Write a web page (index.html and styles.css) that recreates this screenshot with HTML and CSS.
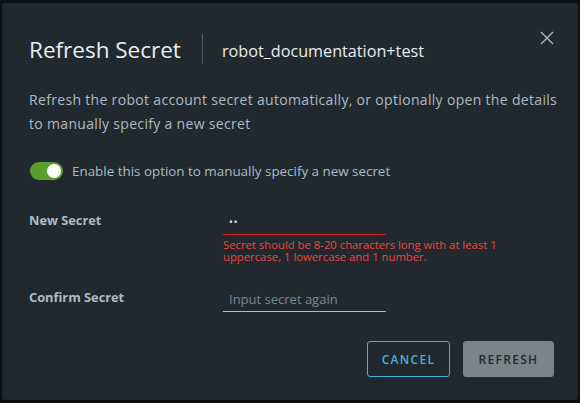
FILE: index.html
```html
<!DOCTYPE html>
<html>
<head>
<meta charset="utf-8">
<link rel="stylesheet" href="styles.css">
</head>
<body>
<div class="backdrop">
  <div class="modal">
    <div class="header">
      <h1 class="title">Refresh Secret</h1>
      <div class="divider"></div>
      <div class="subtitle">robot_documentation+test</div>
      <button class="close" aria-label="Close">
        <svg width="14" height="14" viewBox="0 0 14 14"><path d="M1 1 L13 13 M13 1 L1 13" stroke="#adbbc4" stroke-width="1.4" fill="none"/></svg>
      </button>
    </div>
    <p class="desc">Refresh the robot account secret automatically, or optionally open the details to manually specify a new secret</p>
    <div class="toggle-row">
      <span class="toggle"><span class="knob"></span></span>
      <span class="toggle-label">Enable this option to manually specify a new secret</span>
    </div>
    <div class="field">
      <label class="label">New Secret</label>
      <div class="control">
        <div class="input error"><span class="dots">••</span></div>
        <div class="err">Secret should be 8-20 characters long with at least 1 uppercase, 1 lowercase and 1 number.</div>
      </div>
    </div>
    <div class="field field2">
      <label class="label">Confirm Secret</label>
      <div class="control">
        <div class="input"><span class="placeholder">Input secret again</span></div>
      </div>
    </div>
    <div class="footer">
      <button class="btn btn-outline">CANCEL</button>
      <button class="btn btn-disabled">REFRESH</button>
    </div>
  </div>
</div>
</body>
</html>
```
FILE: styles.css
```css
html, body {
  margin: 0;
  padding: 0;
  background: #0b1013;
}
body {
  font-family: "Open Sans", "Liberation Sans", sans-serif;
  width: 580px;
  height: 403px;
  overflow: hidden;
}
.backdrop {
  padding: 3px 2px 3px 2px;
}
.modal {
  background: #21292f;
  width: 576px;
  height: 397px;
  border-radius: 3px;
  box-sizing: border-box;
  padding: 0 24px 0 27px;
  display: flex;
  flex-direction: column;
}
.header {
  display: flex;
  align-items: center;
  height: 30px;
  margin-top: 31px;
}
.title {
  margin: 0;
  font-weight: 400;
  font-size: 22.5px;
  color: #e9ecef;
}
.divider {
  width: 1px;
  height: 30px;
  background: #4e5a62;
  margin-left: 21px;
  margin-right: 19px;
}
.subtitle {
  font-size: 16.2px;
  color: #e9ecef;
  padding-top: 3px;
}
.close {
  margin-left: auto;
  margin-top: -22px;
  background: none;
  border: 0;
  padding: 0;
  width: 14px;
  height: 14px;
  display: flex;
}
.desc {
  margin: 24px -12px 0 0;
  font-size: 14px;
  letter-spacing: 0.32px;
  line-height: 24px;
  color: #adbbc4;
}
.toggle-row {
  display: flex;
  align-items: center;
  margin: 26px 0 0 1px;
  gap: 9px;
}
.toggle {
  width: 33px;
  height: 18px;
  border-radius: 9px;
  background: #5a9e2b;
  position: relative;
  box-sizing: border-box;
}
.knob {
  position: absolute;
  right: 2px;
  top: 2px;
  width: 14px;
  height: 14px;
  border-radius: 50%;
  background: #ffffff;
}
.toggle-label {
  font-size: 13.4px;
  color: #adbbc4;
}
.field {
  display: flex;
  margin: 29px 0 0 0;
}
.field2 {
  margin-top: 23px;
}
.label {
  width: 194px;
  font-size: 12.8px;
  font-weight: 700;
  color: #adbbc4;
  padding-top: 2px;
}
.control {
  width: 163px;
}
.input {
  height: 26px;
  border-bottom: 1px solid #adbbc4;
  box-sizing: border-box;
  padding-left: 6px;
  display: flex;
  align-items: center;
}
.input.error {
  border-bottom-color: #e02020;
}
.dots {
  color: #e9ecef;
  font-size: 10px;
  letter-spacing: 1px;
}
.placeholder {
  font-size: 13px;
  color: #7a868d;
}
.err {
  width: 290px;
  font-size: 11.3px;
  line-height: 12px;
  color: #f0453c;
  margin-top: 4px;
}
.footer {
  display: flex;
  justify-content: flex-end;
  gap: 13px;
  margin-top: auto;
  margin-bottom: 23px;
}
.btn {
  height: 36px;
  border-radius: 3px;
  font-family: "Open Sans", "Liberation Sans", sans-serif;
  font-size: 12px;
  font-weight: 600;
  letter-spacing: 1.3px;
  box-sizing: border-box;
}
.btn-outline {
  width: 83px;
  background: transparent;
  border: 1px solid #49afd9;
  color: #49afd9;
}
.btn-disabled {
  width: 91px;
  background: #7b8489;
  border: 1px solid #7b8489;
  color: #21292f;
}
```
